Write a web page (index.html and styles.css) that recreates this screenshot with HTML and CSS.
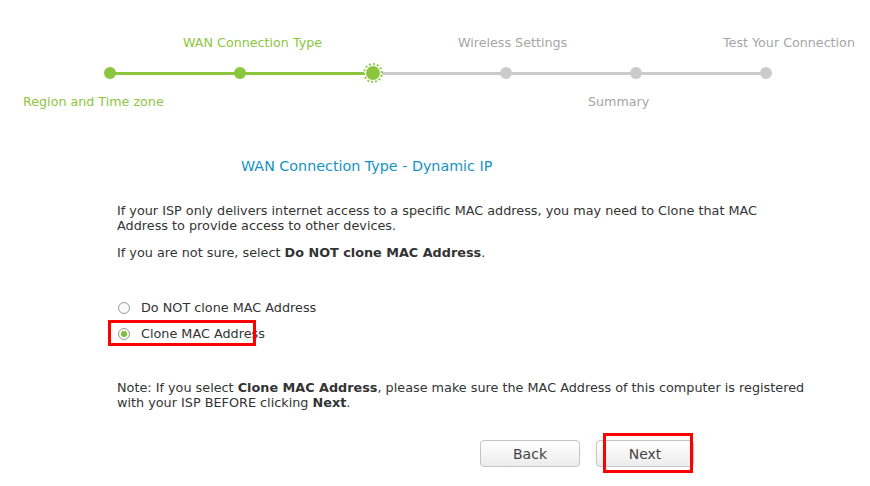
FILE: index.html
```html
<!DOCTYPE html>
<html lang="en">
<head>
<meta charset="UTF-8">
<meta name="viewport" content="width=device-width, initial-scale=1.0">
<title>Quick Setup</title>
<link rel="stylesheet" href="styles.css">
</head>
<body>
    <div class="stepper">
        <div class="track track-done"></div>
        <div class="track track-todo"></div>
        <span class="dot done" style="left: 110px"></span>
        <span class="dot done" style="left: 240px"></span>
        <span class="dot current" style="left: 373px"></span>
        <span class="dot" style="left: 506px"></span>
        <span class="dot" style="left: 636px"></span>
        <span class="dot" style="left: 766px"></span>

        <span class="step-label top active" style="left: 183px">WAN Connection Type</span>
        <span class="step-label top" style="left: 458px">Wireless Settings</span>
        <span class="step-label top" style="left: 723px">Test Your Connection</span>
        <span class="step-label bottom active" style="left: 23px">Region and Time zone</span>
        <span class="step-label bottom" style="left: 588px">Summary</span>
    </div>

    <div class="content">
        <h2 class="title">WAN Connection Type - Dynamic IP</h2>

        <p>If your ISP only delivers internet access to a specific MAC address, you may need to Clone that MAC Address to provide access to other devices.</p>
        <p>If you are not sure, select <b>Do NOT clone MAC Address</b>.</p>

        <div class="options">
            <label class="option">
                <span class="radio"></span>
                Do NOT clone MAC Address
            </label>
            <label class="option highlight">
                <span class="radio checked"></span>
                Clone MAC Address
            </label>
        </div>

        <p class="note">Note: If you select <b>Clone MAC Address</b>, please make sure the MAC Address of this computer is registered with your ISP BEFORE clicking <b>Next</b>.</p>

        <div class="buttons">
            <button type="button">Back</button>
            <div class="mark">
                <button type="button" class="next">Next</button>
            </div>
        </div>
    </div>
</body>
</html>
```

FILE: styles.css
```css
body {
    font-family: "DejaVu Sans", Verdana, sans-serif;
    font-size: 12.8px;
    color: #333;
    background-color: #fff;
    margin: 0;
}

.stepper {
    position: relative;
    height: 130px;
}

.track {
    position: absolute;
    top: 72px;
    height: 3px;
}

.track-done {
    left: 110px;
    width: 263px;
    background-color: #8cc63e;
}

.track-todo {
    left: 373px;
    width: 393px;
    background-color: #cbcbcb;
}

.dot {
    position: absolute;
    top: 73px;
    width: 12px;
    height: 12px;
    margin: -6px 0 0 -6px;
    border-radius: 50%;
    background-color: #cbcbcb;
}

.dot.done {
    background-color: #8cc63e;
}

.dot.current {
    width: 14px;
    height: 14px;
    margin: -9px 0 0 -9px;
    background-color: #8cc63e;
    border: 2px solid #fff;
    outline: 2px dotted #8cc63e;
    outline-offset: -1px;
}

.step-label {
    position: absolute;
    font-size: 12.7px;
    color: #a6a6a6;
    white-space: nowrap;
}

.step-label.active {
    color: #8cc63e;
}

.step-label.top {
    top: 35px;
}

.step-label.bottom {
    top: 94px;
}

.content {
    width: 692px;
    margin-left: 117px;
    padding-top: 28px;
    padding-bottom: 20px;
}

.title {
    font-size: 14.3px;
    line-height: 17px;
    font-weight: normal;
    color: #1592c4;
    margin: 0 0 28px 124px;
}

p {
    margin: 0 0 12px;
    line-height: 15px;
}

.options {
    margin-top: 40px;
    display: flex;
    flex-direction: column;
    gap: 11px;
}

.option {
    display: flex;
    align-items: center;
    gap: 11px;
    height: 15px;
    white-space: nowrap;
}

.option.highlight {
    position: relative;
}

.option.highlight::after {
    content: "";
    position: absolute;
    left: -9px;
    top: -6px;
    width: 142px;
    height: 20px;
    border: 3px solid #f00;
}

.radio {
    width: 12px;
    height: 12px;
    margin-left: 1px;
    border: 1px solid #9a9a9a;
    border-radius: 50%;
    background-color: #fafafa;
    box-sizing: border-box;
    position: relative;
}

.radio.checked::after {
    content: "";
    position: absolute;
    top: 2px;
    left: 2px;
    width: 6px;
    height: 6px;
    border-radius: 50%;
    background-color: #7bbf3a;
}

.note {
    margin-top: 39px;
}

.buttons {
    display: flex;
    justify-content: flex-end;
    gap: 16px;
    margin-top: 30px;
    padding-right: 115px;
}

button {
    width: 100px;
    height: 27px;
    font-family: "DejaVu Sans", Verdana, sans-serif;
    font-size: 14px;
    color: #444;
    background: linear-gradient(#fff, #ececec);
    border: 1px solid #c4c4c4;
    border-radius: 4px;
}

button.next {
    width: 98px;
}

.mark {
    position: relative;
    display: flex;
}

.mark::after {
    content: "";
    position: absolute;
    left: 7px;
    top: -7px;
    width: 84px;
    height: 34px;
    border: 3px solid #f00;
}
```
